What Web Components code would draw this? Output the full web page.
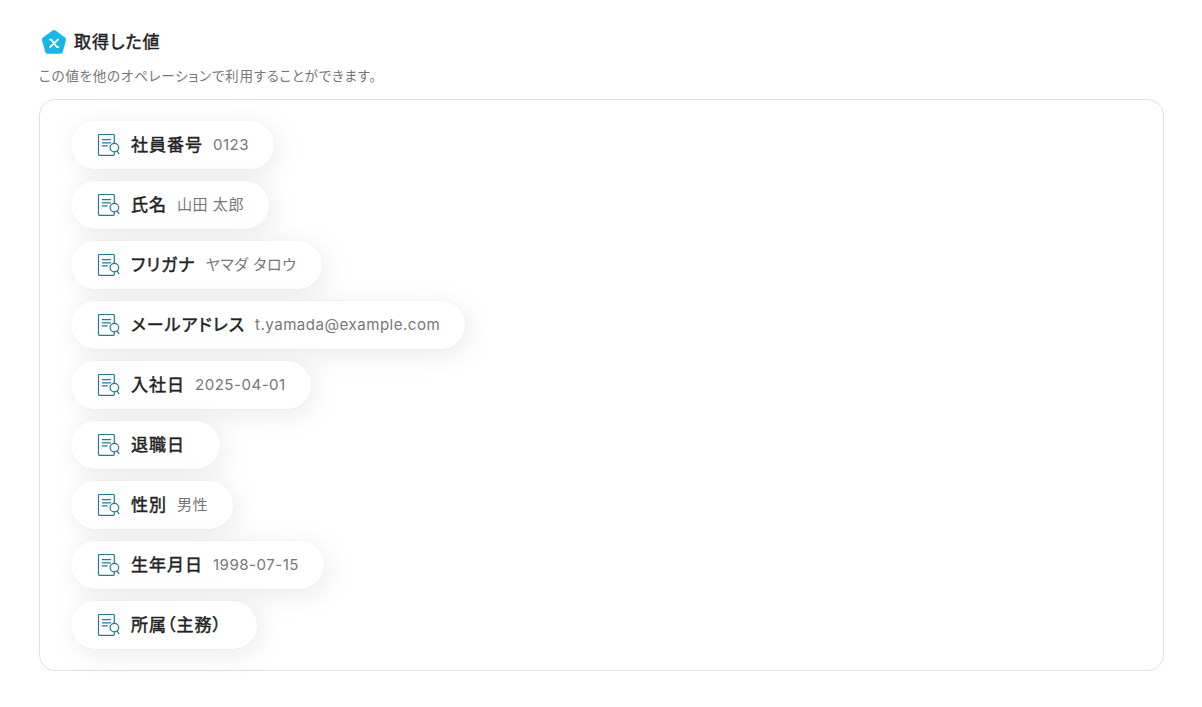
<!DOCTYPE html>
<html lang="ja">
<head>
<meta charset="utf-8">
<title>取得した値</title>
<style>
body { margin: 0; background: #fff; font-family: Inter, "Noto Sans CJK JP", sans-serif; font-feature-settings: "palt"; color: #222; }
</style>
</head>
<body>
<result-panel>
  <span slot="title">取得した値</span>
  <span slot="description">この値を他のオペレーションで利用することができます。</span>
  <value-pill label="社員番号">0123</value-pill>
  <value-pill label="氏名">山田 太郎</value-pill>
  <value-pill label="フリガナ">ヤマダ タロウ</value-pill>
  <value-pill label="メールアドレス">t.yamada@example.com</value-pill>
  <value-pill label="入社日">2025-04-01</value-pill>
  <value-pill label="退職日"></value-pill>
  <value-pill label="性別">男性</value-pill>
  <value-pill label="生年月日">1998-07-15</value-pill>
  <value-pill label="所属（主務）"></value-pill>
</result-panel>
<script>
class PentagonBadge extends HTMLElement {
  constructor() {
    super();
    this.attachShadow({ mode: "open" }).innerHTML = `
      <style>:host { display: block; width: 26px; height: 26px; } svg { display: block; }</style>
      <svg width="26" height="26" viewBox="0 0 26 26">
        <path d="M13 3.7 L22.5 10.5 L19.2 22.2 H6.8 L3.5 10.5 Z" fill="#12b8ea" stroke="#12b8ea" stroke-width="5.2" stroke-linejoin="round"/>
        <path d="M9 10.6 H10.2 L15.8 18 H17.3 M17 10.6 L9.2 18" fill="none" stroke="#fff" stroke-width="1.9" stroke-linecap="round" stroke-linejoin="round"/>
      </svg>`;
  }
}
customElements.define("pentagon-badge", PentagonBadge);

class RecordIcon extends HTMLElement {
  constructor() {
    super();
    this.attachShadow({ mode: "open" }).innerHTML = `
      <style>:host { display: block; width: 24px; height: 24px; } svg { display: block; }</style>
      <svg width="24" height="24" viewBox="0 0 24 24" fill="none" stroke="#1c7d95" stroke-width="1.2" stroke-linecap="round">
        <path d="M18.3 9.6 V2.5 Q18.3 1.5 17.3 1.5 H3.5 Q2.5 1.5 2.5 2.5 V21.3 Q2.5 22.3 3.5 22.3 H17.3 Q18.3 22.3 18.3 21.3 V19"/>
        <path d="M6.3 6.6 H14.6 M6.3 9.8 H14.6 M6.3 12.9 H11.2"/>
        <circle cx="18.4" cy="14.6" r="4.3"/>
        <path d="M21.1 18.1 L22.9 20.6"/>
      </svg>`;
  }
}
customElements.define("record-icon", RecordIcon);

class ValuePill extends HTMLElement {
  constructor() {
    super();
    this.attachShadow({ mode: "open" }).innerHTML = `
      <style>
        :host { display: flex; align-items: center; box-sizing: border-box; height: 48px; padding: 0 25.3px 0 25px; border-radius: 24px;
          background: #fff; box-shadow: 0 0 0 1px rgba(0,0,0,.014), 4px 5px 30px rgba(0,0,0,.085); white-space: nowrap; }
        .label { margin-left: 11px; font-size: 17px; letter-spacing: 1px; line-height: 24px; color: #222; -webkit-text-stroke: .48px #222; }
        .value { margin-left: 10px; font-size: 15.1px; letter-spacing: .48px; line-height: 24px; color: #777; }
      </style>
      <record-icon></record-icon><span class="label"></span><span class="value"><slot></slot></span>`;
  }
  connectedCallback() {
    this.shadowRoot.querySelector(".label").textContent = this.getAttribute("label");
  }
}
customElements.define("value-pill", ValuePill);

class ResultPanel extends HTMLElement {
  constructor() {
    super();
    this.attachShadow({ mode: "open" }).innerHTML = `
      <style>
        :host { display: block; box-sizing: border-box; height: 707px; padding: 29px 38px 0 39px; }
        header { display: flex; align-items: center; height: 26px; padding-left: 2px; gap: 7px; }
        h1 { margin: 0; font-size: 17px; font-weight: 400; line-height: 26px; letter-spacing: 1px; -webkit-text-stroke: .48px #222; }
        p { margin: 10px 0 0; font-size: 13.6px; line-height: 22px; letter-spacing: .69px; color: #777; }
        section { box-sizing: border-box; height: 572px; margin-top: 12px; padding: 21px 31px; border: 1px solid #e2e2e2; border-radius: 16px;
          display: flex; flex-direction: column; align-items: flex-start; gap: 12px; }
      </style>
      <header><pentagon-badge></pentagon-badge><h1><slot name="title"></slot></h1></header>
      <p><slot name="description"></slot></p>
      <section><slot></slot></section>`;
  }
}
customElements.define("result-panel", ResultPanel);
</script>
</body>
</html>
